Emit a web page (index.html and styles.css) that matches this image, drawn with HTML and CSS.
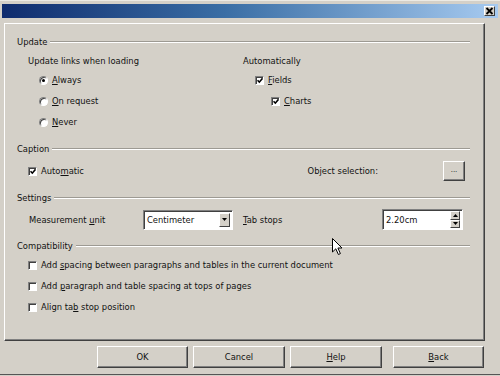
FILE: index.html
```html
<!DOCTYPE html>
<html>
<head>
<meta charset="utf-8">
<link rel="stylesheet" href="styles.css">
</head>
<body>
<div class="window">
  <div class="titlebar">
    <span class="close"><svg width="9" height="8" viewBox="0 0 9 8"><path d="M1.5 1 L7.5 7 M7.5 1 L1.5 7" stroke="#000" stroke-width="1.8"/></svg></span>
  </div>
  <div class="panel">
    <div class="ghead gh-update"><span>Update</span><i class="rule"></i></div>
    <div class="ugrid">
      <div class="cell c-l">Update links when loading</div>
      <div class="cell c-r">Automatically</div>
      <div class="cell c-l opt"><span class="radio on"></span><span><u>A</u>lways</span></div>
      <div class="cell c-r chk-fields"><span class="cb on"><svg viewBox="0 0 7 7"><path d="M0.6 3.2 L2.7 5.4 L6.4 1" fill="none" stroke="#000" stroke-width="1.8"/></svg></span><span><u>F</u>ields</span></div>
      <div class="cell c-l opt"><span class="radio"></span><span><u>O</u>n request</span></div>
      <div class="cell c-r chk-charts"><span class="cb on"><svg viewBox="0 0 7 7"><path d="M0.6 3.2 L2.7 5.4 L6.4 1" fill="none" stroke="#000" stroke-width="1.8"/></svg></span><span><u>C</u>harts</span></div>
      <div class="cell c-l opt"><span class="radio"></span><span><u>N</u>ever</span></div>
    </div>

    <div class="ghead gh-caption"><span>Caption</span><i class="rule"></i></div>
    <div class="caprow">
      <div class="chkline"><span class="cb on"><svg viewBox="0 0 7 7"><path d="M0.6 3.2 L2.7 5.4 L6.4 1" fill="none" stroke="#000" stroke-width="1.8"/></svg></span><span>Auto<u>m</u>atic</span></div>
      <span class="objsel">Object selection:</span>
      <span class="btn dots">...</span>
    </div>

    <div class="ghead gh-settings"><span>Settings</span><i class="rule"></i></div>
    <div class="setrow">
      <span class="lbl-unit">Measurement <u>u</u>nit</span>
      <span class="field combo"><span class="ftext">Centimeter</span><span class="dropbtn"><svg width="5" height="3" viewBox="0 0 5 3"><path d="M0 0 H5 L2.5 3 Z" fill="#000"/></svg></span></span>
      <span class="lbl-tab"><u>T</u>ab stops</span>
      <span class="field spin"><span class="ftext">2.20cm</span><span class="spinbtns"><span class="sb"><svg width="5" height="3" viewBox="0 0 5 3"><path d="M0 3 H5 L2.5 0 Z" fill="#000"/></svg></span><span class="sb"><svg width="5" height="3" viewBox="0 0 5 3"><path d="M0 0 H5 L2.5 3 Z" fill="#000"/></svg></span></span></span>
    </div>

    <div class="ghead gh-compat"><span>Compatibility</span><i class="rule"></i></div>
    <div class="chkline compat c1"><span class="cb"></span><span>Add <u>s</u>pacing between paragraphs and tables in the current document</span></div>
    <div class="chkline compat c2"><span class="cb"></span><span>Add <u>p</u>aragraph and table spacing at tops of pages</span></div>
    <div class="chkline compat c3"><span class="cb"></span><span>Align ta<u>b</u> stop position</span></div>
  </div>
  <div class="buttons">
    <span class="btn b-ok">OK</span>
    <span class="btn b-cancel">Cancel</span>
    <span class="btn b-help"><u>H</u>elp</span>
    <span class="btn b-back"><u>B</u>ack</span>
  </div>
  <svg class="cursor" width="12" height="18" viewBox="0 0 12 18"><path d="M0.5 0.5 L0.5 14 L3.8 10.8 L6.4 16.5 L8.4 15.6 L5.9 10 L10 10 Z" fill="#fff" stroke="#000" stroke-width="1"/></svg>
</div>
</body>
</html>
```

FILE: styles.css
```css
* { box-sizing: border-box; }
html, body { margin: 0; padding: 0; }
body {
  width: 500px;
  height: 376px;
  background: #d4d0c8;
  font-family: "DejaVu Sans", sans-serif;
  font-size: 8.4px;
  color: #111;
  overflow: hidden;
}
u { text-decoration: underline; text-underline-offset: 1px; }

.window {
  position: relative;
  width: 500px;
  height: 375px;
  border-top: 1px solid #eceae4;
  border-bottom: 1px solid #555;
}

.titlebar {
  height: 14px;
  margin: 3px 2px 0 2px;
  background: linear-gradient(to right, #0f2c6e 0%, #3a6ea5 45%, #a6caf0 100%);
  display: flex;
  justify-content: flex-end;
  align-items: center;
  padding-right: 3px;
}
.close {
  width: 11px;
  height: 10px;
  background: #d4d0c8;
  border: 1px solid;
  border-color: #fff #404040 #404040 #fff;
  display: flex;
  align-items: center;
  justify-content: center;
}

.panel {
  margin: 5px 0 0 4px;
  width: 481px;
  height: 318px;
  border: 1px solid;
  border-color: #fff #404040 #404040 #fff;
  box-shadow: inset -1px -1px 0 #808080;
  padding: 0 14px 0 12px;
}

.ghead {
  display: flex;
  align-items: center;
  height: 16px;
}
.ghead .rule {
  flex: 1;
  height: 2px;
  margin-left: 3px;
  border-top: 1px solid #9d9a93;
  border-bottom: 1px solid #fff;
}
.gh-update { margin-top: 10px; }
.gh-caption { margin-top: 11px; }
.gh-settings { margin-top: 9px; }
.gh-compat { margin-top: 8px; }

.ugrid {
  margin-top: 3px;
  display: grid;
  grid-template-columns: 226px 1fr;
  grid-template-rows: 19px 21px 21px 16px;
}
.cell {
  height: 16px;
  display: flex;
  align-items: center;
}
.c-l { padding-left: 11px; }
.c-r { padding-left: 0; }
.opt { padding-left: 22px; }
.chk-fields { padding-left: 12px; }
.chk-charts { padding-left: 28px; }

.radio {
  width: 9px;
  height: 9px;
  border-radius: 50%;
  background: #fff;
  border: 1px solid;
  border-color: #808080 #fff #fff #808080;
  box-shadow: inset 1px 1px 0 #404040;
  margin-right: 4px;
  position: relative;
  flex: none;
}
.radio.on::after {
  content: "";
  position: absolute;
  left: 2px;
  top: 2px;
  width: 3px;
  height: 3px;
  border-radius: 50%;
  background: #000;
}

.cb {
  width: 9px;
  height: 9px;
  background: #fff;
  border: 1px solid;
  border-color: #808080 #fff #fff #808080;
  box-shadow: inset 1px 1px 0 #404040;
  margin-right: 4px;
  flex: none;
  display: flex;
  align-items: center;
  justify-content: center;
  padding: 1px 0 0 1px;
}
.cb svg { width: 7px; height: 7px; display: block; }

.chkline {
  display: flex;
  align-items: center;
  height: 16px;
  padding-left: 11px;
}

.caprow {
  margin-top: 4px;
  height: 20px;
  display: flex;
  align-items: center;
  padding-right: 5px;
}
.objsel { margin-left: auto; margin-right: 65px; }

.btn {
  display: flex;
  align-items: center;
  justify-content: center;
  background: #d4d0c8;
  border: 1px solid;
  border-color: #fff #404040 #404040 #fff;
  box-shadow: inset -1px -1px 0 #808080;
}
.dots {
  width: 22px;
  height: 20px;
  font-size: 7px;
  padding-bottom: 2px;
}

.setrow {
  margin-top: 3px;
  height: 21px;
  display: flex;
  align-items: center;
  padding-left: 12px;
}
.lbl-unit { width: 114px; }
.lbl-tab { width: 139px; margin-left: 10px; }
.field {
  background: #fff;
  border: 1px solid;
  border-color: #808080 #fff #fff #808080;
  box-shadow: inset 1px 1px 0 #404040;
  display: flex;
  align-items: center;
  padding: 1px 2px 1px 3px;
}
.combo { width: 90px; height: 20px; }
.spin { width: 81px; height: 21px; }
.ftext { flex: 1; }
.dropbtn {
  width: 11px;
  height: 14px;
  background: #d4d0c8;
  border: 1px solid;
  border-color: #fff #404040 #404040 #fff;
  display: flex;
  align-items: center;
  justify-content: center;
  align-self: flex-start;
  margin-top: 1px;
}
.spinbtns {
  display: flex;
  flex-direction: column;
  width: 10px;
  height: 17px;
}
.sb {
  flex: 1;
  background: #d4d0c8;
  border: 1px solid;
  border-color: #fff #404040 #404040 #fff;
  display: flex;
  align-items: center;
  justify-content: center;
}

.compat { padding-left: 11px; }
.c1 { margin-top: 3px; }
.c2 { margin-top: 5px; }
.c3 { margin-top: 5px; }

.buttons {
  margin-top: 5px;
  display: flex;
  padding-left: 97px;
}
.buttons .btn { height: 22px; }
.b-ok { width: 91px; }
.b-cancel { width: 92px; margin-left: 5px; }
.b-help { width: 92px; margin-left: 5px; }
.b-back { width: 91px; margin-left: 11px; }

.cursor {
  position: absolute;
  left: 332px;
  top: 237px;
}
```
